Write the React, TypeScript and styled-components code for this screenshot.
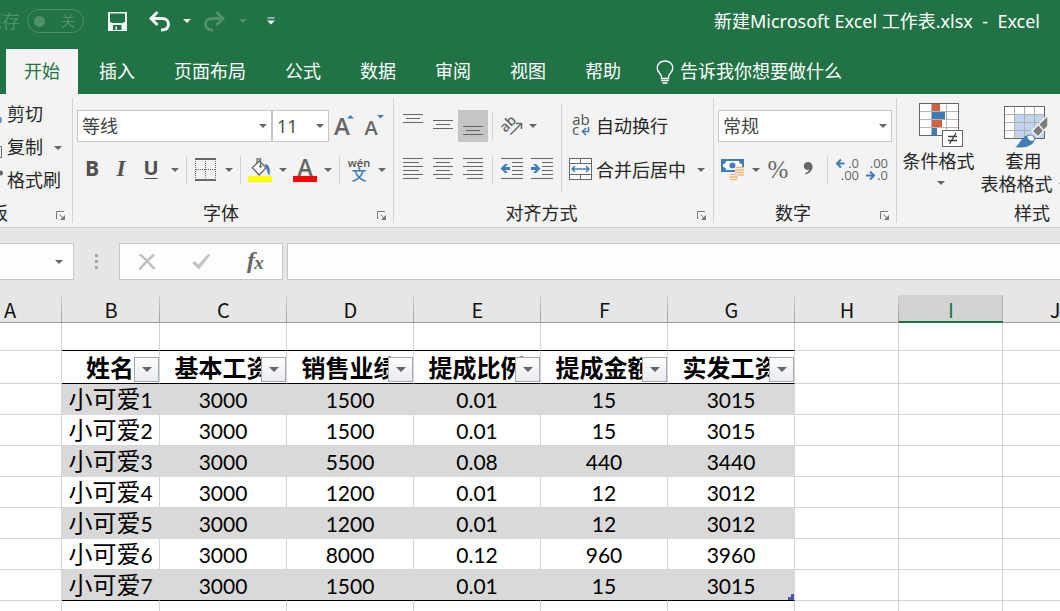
import React from "react";
import styled, { createGlobalStyle, css } from "styled-components";

const green = "#217346";
const ink = "#262626";
const gray = "#666666";
const blue = "#3f7cba";
const faded = "#4f9069";
const line = "#d4d4d4";
const uiFont = `"Open Sans", "Noto Sans CJK SC", sans-serif`;

const GlobalStyle = createGlobalStyle`
  *, *::before, *::after { box-sizing: border-box; }
  body { margin: 0; overflow: hidden; font-family: ${uiFont}; font-size: 18px; color: ${ink}; }
  button, input, select { font: inherit; color: inherit; }
  svg { display: block; flex: none; overflow: visible; }
`;

const Window = styled.div`
  height: 100vh;
  display: flex;
  flex-direction: column;
  overflow: hidden;
  background: #ffffff;
`;

const PlainButton = styled.button`
  border: 0;
  padding: 0;
  margin: 0;
  background: transparent;
  display: flex;
  align-items: center;
  justify-content: center;
  flex: none;
  white-space: nowrap;
`;

const Label = styled.span`
  padding-bottom: 3px;
`;

/* Title bar */
const TitleBar = styled.header`
  height: 42px;
  flex: none;
  display: flex;
  align-items: center;
  background: ${green};
  color: #ffffff;
`;

const AutoSave = styled.div`
  display: flex;
  align-items: center;
  gap: 7px;
  margin-right: 13px;
  color: ${faded};
`;

const AutoSaveLabel = styled(Label)`
  width: 20px;
  display: flex;
  justify-content: flex-end;
  overflow: hidden;
  white-space: nowrap;
`;

const Toggle = styled.button`
  width: 57px;
  height: 24px;
  padding: 0 8px 0 6px;
  display: flex;
  align-items: center;
  justify-content: space-between;
  border: 1px solid ${faded};
  border-radius: 12px;
  background: transparent;
  color: ${faded};
  font-size: 14px;
  line-height: 20px;
`;

const Knob = styled.span`
  width: 11px;
  height: 11px;
  border-radius: 50%;
  background: ${faded};
`;

const TitleButton = styled(PlainButton)<{ $w: number }>`
  width: ${(p) => p.$w}px;
  height: 32px;
`;

const Title = styled.h1`
  margin: 0 20px 0 auto;
  padding-bottom: 2px;
  font: 400 18px "Noto Sans", "Noto Sans CJK SC", sans-serif;
  white-space: pre;
`;

/* Ribbon tabs */
const Tabs = styled.nav`
  height: 52px;
  flex: none;
  display: flex;
  gap: 3px;
  padding: 7px 0 0 6px;
  background: ${green};
`;

const Tab = styled(PlainButton)<{ $active?: boolean }>`
  padding: 0 18px;
  color: ${(p) => (p.$active ? green : "#ffffff")};
  background: ${(p) => (p.$active ? "#f3f3f3" : "transparent")};
`;

const TellMe = styled(PlainButton)`
  padding-left: 14px;
  gap: 6px;
  color: #ffffff;
`;

/* Ribbon */
const Ribbon = styled.section`
  height: 134px;
  flex: none;
  display: flex;
  padding: 4px 0;
  overflow: hidden;
  background: #f3f3f3;
  border-bottom: 1px solid #cfcfcf;
`;

const Group = styled.div<{ $w: number; $top?: number; $left?: number }>`
  width: ${(p) => p.$w}px;
  flex: none;
  display: flex;
  flex-direction: column;
  padding: ${(p) => p.$top ?? 12}px 0 0 ${(p) => p.$left ?? 4}px;
  border-right: 1px solid #d2d2d2;
`;

const GroupFooter = styled.div<{ $indent?: number }>`
  margin-top: auto;
  margin-left: -${(p) => p.$indent ?? 4}px;
  height: 20px;
  display: flex;
  line-height: 20px;
`;

const GroupName = styled.span`
  flex: 1;
  display: flex;
  justify-content: center;
  white-space: nowrap;
`;

const ClippedName = styled(GroupName)`
  flex: none;
  width: 8px;
  margin-right: 40px;
  justify-content: flex-end;
`;

const Launcher = styled(PlainButton)`
  width: 24px;
  padding: 5px 0 0 1px;
`;

const Rows = styled.div`
  display: flex;
  flex-direction: column;
  gap: 12px;
`;

const Row = styled.div`
  height: 32px;
  display: flex;
  align-items: center;
`;

const Columns = styled.div`
  display: flex;
`;

const Tool = styled(PlainButton)<{ $w?: number; $on?: boolean }>`
  width: ${(p) => p.$w ?? 30}px;
  height: 32px;
  background: ${(p) => (p.$on ? "#c5c5c5" : "transparent")};
`;

const TextTool = styled(PlainButton)`
  height: 32px;
`;

const IconSlot = styled.span`
  width: 30px;
  display: flex;
  justify-content: center;
`;

const Split = styled(Tool)`
  width: 15px;
`;

const FarSplit = styled(Split)`
  margin-left: 7px;
`;

const Divider = styled.span<{ $tall?: boolean }>`
  width: 1px;
  height: ${(p) => (p.$tall ? 88 : 28)}px;
  margin: ${(p) => (p.$tall ? "-6px" : "0")} 4px;
  background: #d2d2d2;
`;

const SelectBox = styled.div<{ $w: number }>`
  width: ${(p) => p.$w}px;
  height: 32px;
  display: flex;
  align-items: center;
  background: #ffffff;
  border: 1px solid #c6c6c6;
  svg { margin-left: -12px; margin-right: 4px; pointer-events: none; }
`;

const Select = styled.select`
  appearance: none;
  width: 100%;
  height: 28px;
  padding: 0 0 0 4px;
  border: 0;
  background: transparent;
  color: #444444;
`;

const ClipCommand = styled(PlainButton)`
  height: 33px;
  gap: 2px;
`;

const ClipRow = styled.div`
  display: flex;
  align-items: center;
  gap: 7px;
`;

const BigTool = styled(PlainButton)<{ $w: number }>`
  width: ${(p) => p.$w}px;
  flex-direction: column;
  line-height: 23px;
  padding: 5px 0 0;
`;

const BigIcon = styled.span`
  padding-left: 4px;
  margin-bottom: 3px;
`;

const BigLine = styled.span`
  height: 23px;
  display: flex;
  align-items: center;
  gap: 6px;
`;

/* Formula bar */
const FormulaBar = styled.section`
  height: 67px;
  flex: none;
  display: flex;
  padding: 15px 0;
  background: #e6e6e6;
`;

const fieldBox = css`
  height: 37px;
  background: #fdfdfd;
  border: 1px solid #c6c6c6;
`;

const NameBox = styled.div`
  ${fieldBox}
  width: 74px;
  display: flex;
  align-items: center;
  border-left: 0;
`;

const NameInput = styled.input`
  width: 51px;
  border: 0;
  padding: 0;
  background: transparent;
`;

const Grip = styled.div`
  width: 45px;
  display: flex;
  align-items: center;
  justify-content: center;
`;

const FormulaActions = styled.div`
  ${fieldBox}
  width: 164px;
  display: flex;
  margin-right: 4px;
`;

const FormulaButton = styled(PlainButton)`
  width: 54px;
`;

const FormulaInput = styled.input`
  ${fieldBox}
  flex: 1;
  min-width: 0;
  padding: 0 8px;
  border-right: 0;
`;

/* Sheet */
const Sheet = styled.main`
  flex: 1;
  min-height: 0;
  overflow: hidden;
  display: flex;
  justify-content: flex-start;
`;

const Grid = styled.table`
  flex: none;
  width: max(100%, 1107px);
  align-self: flex-start;
  table-layout: fixed;
  border-collapse: separate;
  border-spacing: 0;
  color: #000000;
`;

const ColHead = styled.th<{ $selected?: boolean; $edge?: boolean }>`
  height: 28px;
  padding: ${(p) => (p.$edge ? "3px 42px 0 0" : "3px 0 0")};
  font: 400 20px/22px "Noto Sans CJK SC", sans-serif;
  white-space: nowrap;
  color: ${(p) => (p.$selected ? green : "#111111")};
  background: ${(p) =>
    p.$selected
      ? "linear-gradient(#b4b4b4, #b4b4b4) right / 1px 100% no-repeat #d2d2d2"
      : "linear-gradient(#d2d2d2, #999999) right / 1px 100% no-repeat #e6e6e6"};
  border-bottom: ${(p) => (p.$selected ? `2px solid ${green}` : "1px solid #9b9b9b")};
`;

const Cell = styled.td<{ $h?: number; $band?: boolean; $inked?: boolean }>`
  position: relative;
  height: ${(p) => p.$h ?? 31}px;
  padding: 2px 0 0;
  text-align: center;
  white-space: nowrap;
  font: 400 21px/28px Lato, "Noto Sans CJK SC", sans-serif;
  background: ${(p) => (p.$band ? "#d9d9d9" : "#ffffff")};
  border-right: 1px solid ${(p) => (p.$band ? "#d9d9d9" : line)};
  border-bottom: 1px solid ${(p) => (p.$inked ? "#000000" : p.$band ? "#d9d9d9" : line)};
`;

const FieldCell = styled(Cell).attrs({ as: "th" })`
  padding: 0 1px 1px 0;
  font: 700 24px/30px "Noto Sans CJK SC", sans-serif;
`;

const FieldText = styled.span`
  display: flex;
  justify-content: center;
  overflow: hidden;
`;

const PersonCell = styled(Cell)`
  padding: 0;
`;

const Person = styled.span`
  font-size: 24px;
`;

const FilterButton = styled.button`
  position: absolute;
  right: 0;
  bottom: 1px;
  width: 25px;
  height: 25px;
  padding: 0;
  display: flex;
  align-items: center;
  justify-content: center;
  border: 1px solid #a3a9b5;
  background: linear-gradient(#fdfdfe, #e9ebf0);
`;

const ResizeHandle = styled.span`
  position: absolute;
  right: 0;
  bottom: 0;
  width: 6px;
  height: 6px;
  background: linear-gradient(#4a5ab0, #4a5ab0) right top / 3px 3px no-repeat,
    linear-gradient(#4a5ab0, #4a5ab0) left bottom / 6px 3px no-repeat;
`;

const Caret = ({ color = gray, w = 8 }: { color?: string; w?: number }) => (
  <svg width={w} height={w / 2} viewBox="0 0 8 4" aria-hidden="true">
    <path d="M0 0H8L4 4Z" fill={color} />
  </svg>
);

const Icon = ({ children, w = 24, h = 24 }: { children: React.ReactNode; w?: number; h?: number }) => (
  <svg width={w} height={h} viewBox={`0 0 ${w} ${h}`} fill="none" aria-hidden="true">
    {children}
  </svg>
);

/* Horizontal strokes of an alignment icon: [x1, x2, y] */
const Lines = ({ rows }: { rows: number[][] }) => (
  <>
    {rows.map(([a, b, y]) => (
      <path key={y} d={`M${a} ${y + 0.5}H${b}`} stroke={gray} shapeRendering="crispEdges" />
    ))}
  </>
);

const ys = [0, 4, 8, 12, 16, 20];
const full = [2, 22];
const stack = (short: number[]) => ys.map((y, i) => [...(i % 2 ? short : full), y]);
const short3 = (top: number) => [
  [2, 22, top],
  [5, 19, top + 4],
  [2, 22, top + 8],
];
const indentRows = ys.map((y, i) => (i === 0 || i === 5 ? [1, 23, y] : [12, 23, y]));

const LauncherButton = ({ label }: { label: string }) => (
  <Launcher aria-label={label}>
    <Icon w={10} h={10}>
      <path d="M0.500 8V0.500H8" stroke="#777" />
      <path d="M3.500 3.500L7 7" stroke="#777" />
      <path d="M9 4V9H4Z" fill="#777" />
    </Icon>
  </Launcher>
);

const SplitArrow = ({ label }: { label: string }) => (
  <Split aria-label={label}>
    <Caret />
  </Split>
);

const Letter = ({ x, y, size, fill = gray, weight = 600, font = uiFont, italic, anchor = "middle", rotate, children }: {
  x: number; y: number; size: number; fill?: string; weight?: number; font?: string;
  italic?: boolean; anchor?: "middle" | "start" | "end"; rotate?: string; children: React.ReactNode;
}) => (
  <text x={x} y={y} fontSize={size} fill={fill} fontWeight={weight} fontFamily={font}
    fontStyle={italic ? "italic" : "normal"} textAnchor={anchor} transform={rotate}>
    {children}
  </text>
);

const tabs = ["开始", "插入", "页面布局", "公式", "数据", "审阅", "视图", "帮助"];
const columns = ["A", "B", "C", "D", "E", "F", "G", "H", "I", "J"];
const widths = [62, 98, 127, 127, 127, 127, 127, 104, 104];
const fields = ["姓名", "基本工资", "销售业绩", "提成比例", "提成金额", "实发工资"];
const people = [
  ["1", "3000", "1500", "0.01", "15", "3015"],
  ["2", "3000", "1500", "0.01", "15", "3015"],
  ["3", "3000", "5500", "0.08", "440", "3440"],
  ["4", "3000", "1200", "0.01", "12", "3012"],
  ["5", "3000", "1200", "0.01", "12", "3012"],
  ["6", "3000", "8000", "0.12", "960", "3960"],
  ["7", "3000", "1500", "0.01", "15", "3015"],
];

const ClipboardGroup = () => (
  <Group $w={73} $top={0} $left={0}>
    <ClipRow>
      <ClipCommand>
        <Icon w={5} h={24}><path d="M0 14.500C1.500 15 1.500 19 0 19.500" stroke={blue} strokeWidth="1.500" /></Icon>
        <Label>剪切</Label>
      </ClipCommand>
    </ClipRow>
    <ClipRow>
      <ClipCommand>
        <Icon w={5} h={24}><path d="M0 10.500H1.500V21.500H0" stroke={gray} /></Icon>
        <Label>复制</Label>
      </ClipCommand>
      <SplitArrow label="复制选项" />
    </ClipRow>
    <ClipRow>
      <ClipCommand>
        <Icon w={5} h={24}><circle cx="0.500" cy="4" r="2.500" fill={gray} /></Icon>
        <Label>格式刷</Label>
      </ClipCommand>
    </ClipRow>
    <GroupFooter $indent={0}>
      <ClippedName>板</ClippedName>
      <LauncherButton label="剪贴板设置" />
    </GroupFooter>
  </Group>
);

const FontGroup = () => (
  <Group $w={321}>
    <Rows>
      <Row>
        <SelectBox $w={195}>
          <Select aria-label="字体"><option>等线</option></Select>
          <Caret />
        </SelectBox>
        <SelectBox $w={57}>
          <Select aria-label="字号"><option>11</option></Select>
          <Caret />
        </SelectBox>
        <Tool aria-label="增大字号">
          <Icon>
            <Letter x={10} y={21} size={24}>A</Letter>
            <path d="M15 4.500H22L18.500 1Z" fill={blue} />
          </Icon>
        </Tool>
        <Tool aria-label="减小字号">
          <Icon>
            <Letter x={9} y={21} size={20}>A</Letter>
            <path d="M15 1H22L18.500 4.500Z" fill={blue} />
          </Icon>
        </Tool>
      </Row>
      <Row>
        <Tool aria-label="加粗"><Icon><Letter x={12} y={18} size={21} weight={700} fill="#505050">B</Letter></Icon></Tool>
        <Tool $w={28} aria-label="倾斜"><Icon><Letter x={12} y={18} size={23} weight={700} italic font={`"Liberation Serif", serif`} fill="#505050">I</Letter></Icon></Tool>
        <Tool $w={32} aria-label="下划线">
          <Icon>
            <Letter x={12} y={17} size={20} weight={700} fill="#505050">U</Letter>
            <path d="M5.500 20.500H18.500" stroke="#505050" />
          </Icon>
        </Tool>
        <SplitArrow label="下划线选项" />
        <Divider />
        <Tool aria-label="边框">
          <Icon>
            <path d="M1 1H22M1 22H22" stroke={gray} strokeWidth="2" />
            <path d="M1.500 3V21M11.500 3V21M21.500 3V21M2 11.500H21" stroke={gray} strokeDasharray="1 1" shapeRendering="crispEdges" />
          </Icon>
        </Tool>
        <SplitArrow label="边框选项" />
        <Divider />
        <Tool aria-label="填充颜色">
          <Icon>
            <path d="M11.300 3L18 9.800L11.300 17L4.300 9.800Z" fill="#fff" stroke={gray} strokeWidth="1.300" />
            <path d="M9 5.500V0.800H12.500V8" stroke={gray} strokeWidth="1.200" />
            <circle cx="12.500" cy="8.500" r="1.300" fill={gray} />
            <path d="M16.500 6C21 6 22.500 10 21.500 17.500C19 16 19.500 11 16.500 6Z" fill={blue} />
            <rect y="18" width="24" height="6" fill="#ffff00" />
          </Icon>
        </Tool>
        <SplitArrow label="填充颜色选项" />
        <Tool aria-label="字体颜色">
          <Icon>
            <Letter x={12} y={18} size={23}>A</Letter>
            <rect y="18" width="24" height="6" fill="#ff0000" />
          </Icon>
        </Tool>
        <SplitArrow label="字体颜色选项" />
        <Divider />
        <Tool aria-label="显示拼音">
          <Icon>
            <Letter x={12} y={9} size={11} weight={600} fill="#505050">wén</Letter>
            <Letter x={12} y={22} size={15} weight={500} fill={blue}>文</Letter>
          </Icon>
        </Tool>
        <SplitArrow label="拼音选项" />
      </Row>
    </Rows>
    <GroupFooter>
      <GroupName>字体</GroupName>
      <LauncherButton label="字体设置" />
    </GroupFooter>
  </Group>
);

const AlignGroup = () => (
  <Group $w={320}>
    <Columns>
      <Rows>
        <Row>
          <Tool aria-label="顶端对齐"><Icon><Lines rows={short3(0)} /></Icon></Tool>
          <Tool aria-label="垂直居中"><Icon><Lines rows={short3(6)} /></Icon></Tool>
          <Tool $on aria-label="底端对齐"><Icon><Lines rows={short3(12)} /></Icon></Tool>
          <Divider />
          <Tool $w={28} aria-label="方向">
            <Icon>
              <Letter x={10} y={14} size={14} rotate="rotate(-45 10 11)">ab</Letter>
              <path d="M11.500 20.500L22 10" stroke={gray} strokeWidth="1.500" />
              <path d="M17 9.500H22.500V15" stroke={gray} strokeWidth="1.500" />
            </Icon>
          </Tool>
          <SplitArrow label="方向选项" />
        </Row>
        <Row>
          <Tool aria-label="左对齐"><Icon><Lines rows={stack([2, 18])} /></Icon></Tool>
          <Tool aria-label="居中"><Icon><Lines rows={stack([5, 19])} /></Icon></Tool>
          <Tool aria-label="右对齐"><Icon><Lines rows={stack([6, 22])} /></Icon></Tool>
          <Divider />
          <Tool aria-label="减少缩进量">
            <Icon>
              <Lines rows={indentRows} />
              <path d="M0.500 10.500L5 6H8L5 9H10V12H5L8 15H5Z" fill={blue} />
            </Icon>
          </Tool>
          <Tool aria-label="增加缩进量">
            <Icon>
              <Lines rows={indentRows} />
              <path d="M10.500 10.500L6 6H3L6 9H1V12H6L3 15H6Z" fill={blue} />
            </Icon>
          </Tool>
        </Row>
      </Rows>
      <Divider $tall />
      <Rows>
        <Row>
          <TextTool>
            <IconSlot>
              <Icon>
                <Letter x={12} y={11} size={15} weight={500} fill="#505050">ab</Letter>
                <Letter x={3} y={21} size={15} weight={500} fill="#505050" anchor="start">c</Letter>
                <path d="M19.500 13V17.500H14" stroke={blue} strokeWidth="1.500" />
                <path d="M17 14L13.500 17.500L17 21" stroke={blue} strokeWidth="1.500" />
              </Icon>
            </IconSlot>
            <Label>自动换行</Label>
          </TextTool>
        </Row>
        <Row>
          <TextTool>
            <IconSlot>
              <Icon>
                <rect x="0.500" y="0.500" width="22" height="21" fill="#fff" stroke={gray} />
                <path d="M0 5.500H23M0 16.500H23M11.500 0V5M11.500 17V22" stroke={gray} shapeRendering="crispEdges" />
                <path d="M3 11H20M6 8L3 11L6 14M17 8L20 11L17 14" stroke={blue} strokeWidth="1.500" />
              </Icon>
            </IconSlot>
            <Label>合并后居中</Label>
          </TextTool>
          <FarSplit aria-label="合并选项"><Caret /></FarSplit>
        </Row>
      </Rows>
    </Columns>
    <GroupFooter>
      <GroupName>对齐方式</GroupName>
      <LauncherButton label="对齐设置" />
    </GroupFooter>
  </Group>
);

const coin = "#ebbd79";

const NumberGroup = () => (
  <Group $w={183}>
    <Rows>
      <Row>
        <SelectBox $w={174}>
          <Select aria-label="数字格式"><option>常规</option></Select>
          <Caret />
        </SelectBox>
      </Row>
      <Row>
        <Tool aria-label="会计数字格式">
          <Icon>
            <rect y="1" width="23" height="13" fill={blue} />
            <path d="M5 3H18C18 5 19 6 21 6V9C19 9 18 10 18 12H5C5 10 4 9 2 9V6C4 6 5 5 5 3Z" fill="#fff" />
            <circle cx="11.500" cy="7.500" r="3" fill={blue} />
            <rect x="14" y="9" width="9" height="10" fill="#f3f3f3" />
            <path d="M15 9.500H23M14 12H23M14 14.500H23M15 17H23" stroke={coin} strokeWidth="1.700" />
            <rect x="8" y="15" width="9" height="8" fill="#f3f3f3" />
            <path d="M9 16.500H16M8 19H17M9 21.500H16" stroke={coin} strokeWidth="1.700" />
          </Icon>
        </Tool>
        <SplitArrow label="会计格式选项" />
        <Tool aria-label="百分比样式"><Icon><Letter x={12} y={20} size={25} weight={400} font={`"Liberation Serif", serif`}>%</Letter></Icon></Tool>
        <Tool aria-label="千位分隔样式">
          <Icon>
            <path d="M12 4C14.800 4 16.500 6 16.500 8.700C16.500 12.500 13.500 15.500 9 16.500V15.300C11.500 14.500 12.800 13.300 13 11.800C10.500 12.500 7.800 10.800 7.800 8.200C7.800 5.800 9.600 4 12 4Z" fill={gray} />
          </Icon>
        </Tool>
        <Divider />
        <Tool aria-label="增加小数位数">
          <Icon>
            <Letter x={24} y={10} size={13} weight={500} anchor="end">.0</Letter>
            <Letter x={24} y={22} size={13} weight={500} anchor="end">.00</Letter>
            <path d="M9.500 5.500H3M6 1.500L2 5.500L6 9.500" stroke={blue} strokeWidth="2" />
          </Icon>
        </Tool>
        <Tool aria-label="减少小数位数">
          <Icon>
            <Letter x={23} y={10} size={13} weight={500} anchor="end">.00</Letter>
            <Letter x={23} y={22} size={13} weight={500} anchor="end">.0</Letter>
            <path d="M1 17.500H8M5 13.500L9 17.500L5 21.500" stroke={blue} strokeWidth="2" />
          </Icon>
        </Tool>
      </Row>
    </Rows>
    <GroupFooter>
      <GroupName>数字</GroupName>
      <LauncherButton label="数字设置" />
    </GroupFooter>
  </Group>
);

const StylesGroup = () => (
  <Group $w={271} $top={0} $left={0}>
    <Columns>
      <BigTool $w={83}>
        <BigIcon>
          <Icon w={44} h={44}>
            <rect x="0.500" y="0.500" width="39" height="32" fill="#fff" stroke={gray} />
            <path d="M12.500 1V32M27.500 1V32M1 8.500H39M1 16.500H39M1 24.500H39" stroke="#b5b5b5" shapeRendering="crispEdges" />
            <path d="M13 1H21V8H13ZM13 17H23V24H13Z" fill="#d65f3f" />
            <path d="M13 9H26V16H13ZM13 25H18V32H13Z" fill={blue} />
            <rect x="23.500" y="27.500" width="20" height="16" fill="#fff" stroke={gray} />
            <path d="M29 33.500H38M29 37.500H38M37 30L30.500 41" stroke="#404040" strokeWidth="1.300" />
          </Icon>
        </BigIcon>
        <BigLine>条件格式</BigLine>
        <BigLine><BigIcon><Caret /></BigIcon></BigLine>
      </BigTool>
      <BigTool $w={87}>
        <BigIcon>
          <Icon w={44} h={44}>
            <rect x="0.500" y="3.500" width="40" height="32" fill="#fff" stroke={gray} />
            <path d="M11 12H40V35H11Z" fill="#c0d4eb" />
            <path d="M10.500 4V35M20.500 4V35M30.500 4V35M1 11.500H40M1 19.500H40M1 27.500H40" stroke="#b0b0b0" shapeRendering="crispEdges" />
            <path d="M44 12V23L34 34L28 28Z" fill="#7c7c7c" stroke="#f3f3f3" strokeWidth="1.500" />
            <path d="M35 22L40 28" stroke="#f3f3f3" strokeWidth="1.500" />
            <path d="M11 44C16 42 18 32 25 32C30 32 32 37 29 40C25 44.500 17 45 11 44Z" fill={blue} />
            <path d="M23 33C27 30 32 34 30 38C27 39 23 37 23 33Z" fill="#fff" stroke={blue} />
          </Icon>
        </BigIcon>
        <BigLine>套用</BigLine>
        <BigLine>表格格式<Caret /></BigLine>
      </BigTool>
    </Columns>
    <GroupFooter $indent={0}>
      <GroupName>样式</GroupName>
    </GroupFooter>
  </Group>
);

const UndoArrow = ({ color }: { color: string }) => (
  <>
    <path d="M2.500 7.500H14C18 7.500 20.500 10 20.500 13.300C20.500 17 18 19 13 19" stroke={color} strokeWidth="3" />
    <path d="M9.500 1L3 7.500L9.500 14" stroke={color} strokeWidth="3" />
  </>
);

export default function App() {
  return (
    <Window>
      <GlobalStyle />
      <TitleBar>
        <AutoSave>
          <AutoSaveLabel>保存</AutoSaveLabel>
          <Toggle aria-label="自动保存"><Knob />关</Toggle>
        </AutoSave>
        <TitleButton $w={40} aria-label="保存">
          <Icon w={19} h={19}>
            <path d="M0 0H19V19H0Z" fill="#f4f4f4" />
            <path d="M2 1.500H17V10H16L15 11H4L3 10H2Z" fill={green} />
            <path d="M5 13H13.500V18H9V14.500H7.500V18H5Z" fill={green} />
          </Icon>
        </TitleButton>
        <TitleButton $w={44} aria-label="撤消"><Icon w={22} h={20}><UndoArrow color="#f4f4f4" /></Icon></TitleButton>
        <TitleButton $w={12} aria-label="撤消选项"><Caret color="#f4f4f4" /></TitleButton>
        <TitleButton $w={44} aria-label="恢复">
          <Icon w={22} h={20}><g transform="translate(22 0) scale(-1 1)"><UndoArrow color={faded} /></g></Icon>
        </TitleButton>
        <TitleButton $w={12} aria-label="恢复选项"><Caret color={faded} /></TitleButton>
        <TitleButton $w={44} aria-label="自定义快速访问工具栏">
          <Icon w={8} h={8}>
            <path d="M0.500 1H7.500" stroke="#f4f4f4" />
            <path d="M0 3.500H8L4 7.500Z" fill="#f4f4f4" />
          </Icon>
        </TitleButton>
        <Title>{"新建Microsoft Excel 工作表.xlsx  -  Excel"}</Title>
      </TitleBar>

      <Tabs aria-label="功能区">
        {tabs.map((t, i) => (
          <Tab key={t} $active={i === 0}><Label>{t}</Label></Tab>
        ))}
        <TellMe>
          <Icon w={18} h={24}>
            <path d="M5.500 18.500V16.500C5.500 14 1.200 12.500 1.200 8C1.200 4 4.500 1 9 1C13.500 1 16.800 4 16.800 8C16.800 12.500 12.500 14 12.500 16.500V18.500Z" stroke="#fff" strokeWidth="1.400" />
            <path d="M5 20.500H13M6.500 23H11.500" stroke="#fff" strokeWidth="1.300" />
          </Icon>
          <Label>告诉我你想要做什么</Label>
        </TellMe>
      </Tabs>

      <Ribbon>
        <ClipboardGroup />
        <FontGroup />
        <AlignGroup />
        <NumberGroup />
        <StylesGroup />
      </Ribbon>

      <FormulaBar>
        <NameBox>
          <NameInput aria-label="名称框" />
          <Split aria-label="名称列表"><Caret /></Split>
        </NameBox>
        <Grip>
          <Icon w={3} h={15}><path d="M0 0H3V3H0ZM0 6H3V9H0ZM0 12H3V15H0Z" fill="#a8a8a8" /></Icon>
        </Grip>
        <FormulaActions>
          <FormulaButton aria-label="取消">
            <Icon w={18} h={18}><path d="M1.500 1.500C6 4 12 11 16.500 16M16 1.500C11 6 5 12 1.500 16.500" stroke="#c0c0c0" strokeWidth="2.500" /></Icon>
          </FormulaButton>
          <FormulaButton aria-label="输入">
            <Icon w={20} h={18}><path d="M1 10L3.500 8L7.500 11.500L17 1L19.500 2L8 16.500Z" fill="#c4c4c4" /></Icon>
          </FormulaButton>
          <FormulaButton aria-label="插入函数">
            <Icon>
              <Letter x={8} y={18} size={24} italic weight={700} font={`"Liberation Serif", serif`}>f</Letter>
              <Letter x={16} y={19} size={19} italic weight={700} font={`"Liberation Serif", serif`}>x</Letter>
            </Icon>
          </FormulaButton>
        </FormulaActions>
        <FormulaInput aria-label="编辑栏" />
      </FormulaBar>

      <Sheet>
        <Grid>
          <colgroup>
            {widths.map((w, i) => <col key={i} width={w} />)}
            <col />
          </colgroup>
          <thead>
            <tr>
              {columns.map((c) => (
                <ColHead key={c} scope="col" $selected={c === "I"} $edge={c === "A"}>{c}</ColHead>
              ))}
            </tr>
          </thead>
          <tbody>
            <tr>
              {columns.map((c, i) => <Cell key={c} $h={28} $inked={i > 0 && i < 7} />)}
            </tr>
            <tr>
              <Cell $h={33} />
              {fields.map((f) => (
                <FieldCell key={f} $h={33} $inked>
                  <FieldText>{f}</FieldText>
                  <FilterButton aria-label={`筛选${f}`}><Caret w={10} /></FilterButton>
                </FieldCell>
              ))}
              <Cell $h={33} /><Cell $h={33} /><Cell $h={33} />
            </tr>
            {people.map(([id, ...values], r) => {
              const last = r === people.length - 1;
              const band = r % 2 === 0;
              return (
                <tr key={id}>
                  <Cell />
                  <PersonCell $band={band} $inked={last}><Person>小可爱</Person>{id}</PersonCell>
                  {values.map((v, i) => (
                    <Cell key={i} $band={band} $inked={last}>
                      {v}
                      {last && i === 4 && <ResizeHandle />}
                    </Cell>
                  ))}
                  <Cell /><Cell /><Cell />
                </tr>
              );
            })}
            <tr>
              {columns.map((c) => <Cell key={c} />)}
            </tr>
          </tbody>
        </Grid>
      </Sheet>
    </Window>
  );
}
